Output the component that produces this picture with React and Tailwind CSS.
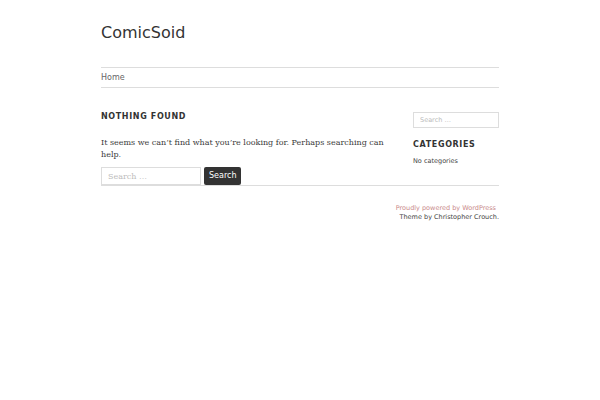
export default function App() {
  return (
    <div className="min-h-[400px] w-[600px] bg-white text-[#333]" style={{ fontFamily: '"DejaVu Sans", sans-serif' }}>
      <div className="mx-auto w-[398px] pt-[22px]">
        <header>
          <h1 className="text-[16px] leading-[22px] text-[#333]">ComicSoid</h1>
          <nav className="mt-[23px] border-y border-[#ddd] py-[4px] text-[8px] leading-[11px] text-[#666]">
            <a href="#">Home</a>
          </nav>
        </header>
        <div className="mt-[23px] flex gap-[12px]">
          <main className="flex-1">
            <h2 className="text-[8px] font-bold leading-[11px] tracking-[0.08em] text-[#333]">NOTHING FOUND</h2>
            <p
              className="mt-[15px] text-[8px] leading-[12px] text-[#3a3a3a]"
              style={{ fontFamily: '"DejaVu Serif", serif' }}
            >
              It seems we can’t find what you’re looking for. Perhaps searching can help.
            </p>
            <form className="mt-[6px] flex items-center gap-[3px]">
              <input
                type="search"
                placeholder="Search …"
                className="h-[18px] w-[100px] border border-[#ddd] px-[6px] text-[8px] placeholder:text-[#bbb]"
                style={{ fontFamily: '"DejaVu Serif", serif' }}
              />
              <button type="button" className="h-[18px] rounded-[2px] bg-[#333] px-[5px] text-[8px] text-white">
                Search
              </button>
            </form>
          </main>
          <aside className="w-[86px]">
            <input
              type="search"
              placeholder="Search …"
              className="mt-[1px] block h-[16px] w-full border border-[#ddd] px-[6px] text-[6.5px] placeholder:text-[#bbb]"
            />
            <h3 className="mt-[11px] text-[8px] font-bold leading-[11px] tracking-[0.08em] text-[#333]">CATEGORIES</h3>
            <p className="mt-[7px] text-[6.5px] leading-[9px] text-[#444]">No categories</p>
          </aside>
        </div>
        <footer className="border-t border-[#ddd] pt-[18px] text-right text-[6.5px] leading-[9px]">
          <p className="pr-[3px] text-[#c98a8a]">Proudly powered by WordPress</p>
          <p className="text-[#444]">Theme by Christopher Crouch.</p>
        </footer>
      </div>
    </div>
  );
}
